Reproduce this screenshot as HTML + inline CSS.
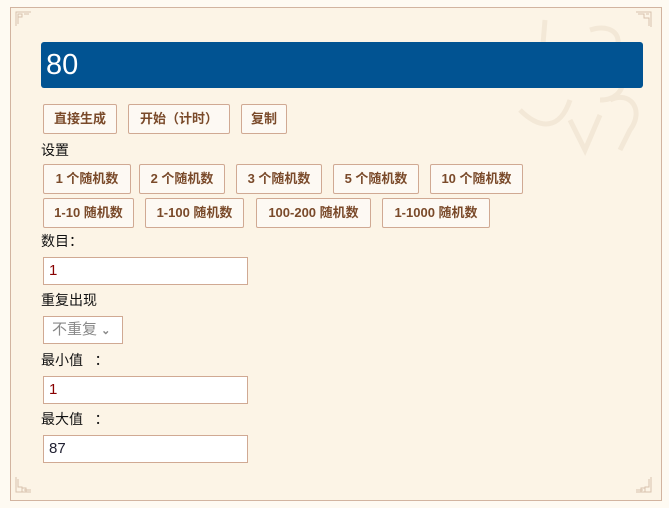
<!DOCTYPE html>
<html><head><meta charset="utf-8"><style>
body{margin:0;background:#fefaf2;font-family:"Liberation Sans","Noto Sans CJK SC",sans-serif;font-size:14px;color:#111;width:669px;height:508px;position:relative;overflow:hidden}
.box{position:absolute;left:10px;top:7px;width:652px;height:494px;border:1px solid #d2b4a0;background:#fcf4e6;box-sizing:border-box}
.bar{position:absolute;left:41px;top:42px;width:602px;height:46px;background:#015392;border-radius:3px;color:#fff;font-size:29px;line-height:46px;padding-left:5px;box-sizing:border-box}
.b{position:absolute;height:30px;border:1px solid #d0a993;background:#fdf9f3;border-radius:2px;box-sizing:border-box;font-weight:bold;font-size:13px;color:#7a4a2a;text-align:center;line-height:28px}
.l{position:absolute;left:41px;font-size:14px;line-height:16px}
.i{position:absolute;left:43px;width:205px;height:28px;border:1px solid #d0a993;background:#fff;box-sizing:border-box;font-size:15px;line-height:26px;padding-left:5px}
.c{position:absolute;width:16px;height:16px;}
</style></head><body>
<div class="box"></div>
<svg style="position:absolute;left:500px;top:10px" width="160" height="150" opacity="0.18"><g fill="none" stroke="#cdb596" stroke-width="5"><path d="M45 10 L40 70"/><path d="M90 20 c30 -10 40 20 10 30 c30 5 30 40 0 40"/><path d="M110 90 c20 -10 35 10 20 30 l-10 20"/><path d="M20 100 c20 20 40 20 50 -10"/><path d="M70 110 l15 30 l15 -35"/></g></svg>
<svg class="c" style="left:15px;top:11px" viewBox="0 0 16 16" fill="none" stroke="#d8c2ad"><path d="M1 15V1h15M3 13V3h4v3H3M9 3h5"/></svg>
<svg class="c" style="left:636px;top:11px" viewBox="0 0 16 16" fill="none" stroke="#d8c2ad"><path d="M0 1h15v15M2 3h6v4h5v8M10 3h3"/></svg>
<svg class="c" style="left:15px;top:477px" viewBox="0 0 16 16" fill="none" stroke="#d8c2ad"><path d="M1 0v15h15M3 2v8h4v5M7 11h4v4M9 13h7"/></svg>
<svg class="c" style="left:636px;top:477px" viewBox="0 0 16 16" fill="none" stroke="#d8c2ad"><path d="M15 0v15H0M13 2v8H9v5M9 11H5v4M7 13H0"/></svg>
<div class="bar">80</div>
<div class="b" style="left:43px;top:104px;width:74px">直接生成</div>
<div class="b" style="left:128px;top:104px;width:102px">开始（计时）</div>
<div class="b" style="left:241px;top:104px;width:46px">复制</div>
<div class="l" style="top:142px">设置</div>
<div class="b" style="left:43px;top:164px;width:88px">1 个随机数</div>
<div class="b" style="left:139px;top:164px;width:86px">2 个随机数</div>
<div class="b" style="left:236px;top:164px;width:86px">3 个随机数</div>
<div class="b" style="left:333px;top:164px;width:86px">5 个随机数</div>
<div class="b" style="left:430px;top:164px;width:93px">10 个随机数</div>
<div class="b" style="left:43px;top:198px;width:91px">1-10 随机数</div>
<div class="b" style="left:145px;top:198px;width:99px">1-100 随机数</div>
<div class="b" style="left:256px;top:198px;width:115px">100-200 随机数</div>
<div class="b" style="left:382px;top:198px;width:108px">1-1000 随机数</div>
<div class="l" style="top:233px">数目：</div>
<div class="i" style="top:257px;color:#800">1</div>
<div class="l" style="top:292px">重复出现</div>
<div class="i" style="top:316px;width:80px;color:#888;padding-left:8px;font-size:15px">不重复 <span style="font-size:11px;font-weight:bold">⌄</span></div>
<div class="l" style="top:352px">最小值 &nbsp; ：</div>
<div class="i" style="top:376px;color:#800">1</div>
<div class="l" style="top:411px">最大值 &nbsp; ：</div>
<div class="i" style="top:435px;color:#223">87</div>
</body></html>
